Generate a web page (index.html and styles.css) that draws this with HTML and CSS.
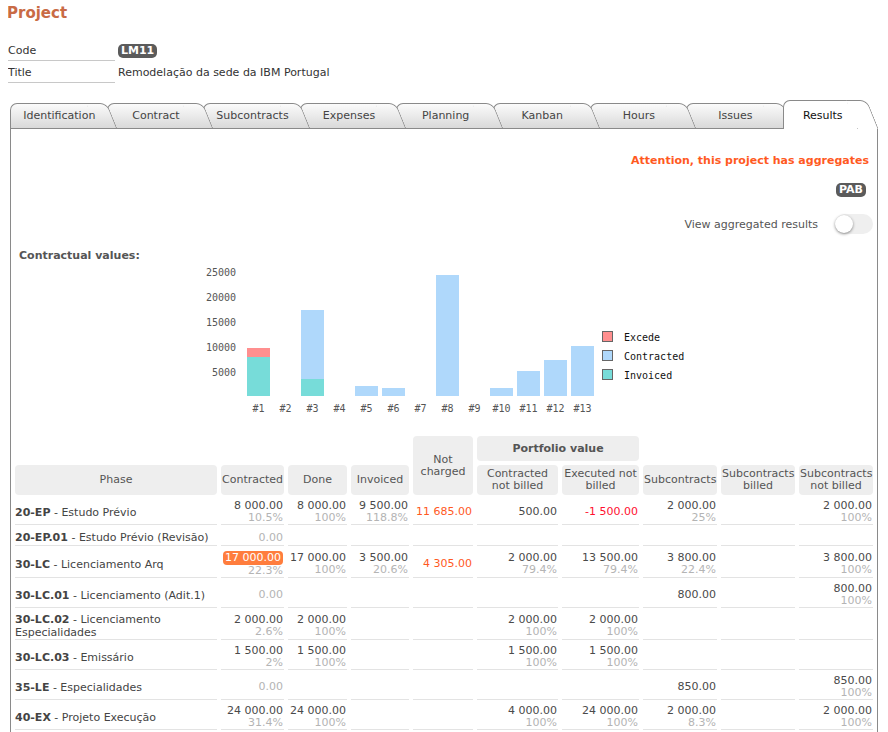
FILE: index.html
```html
<!DOCTYPE html>
<html lang="en">
<head>
    <meta charset="UTF-8">
    <meta name="viewport" content="width=device-width, initial-scale=1.0">
    <title>Project LM11 - Results</title>
    <link rel="stylesheet" href="styles.css">
</head>
<body>
    <h1 class="page-title">Project</h1>

    <div class="info">
        <div class="info-row">
            <div class="info-label">Code</div>
            <div class="info-value"><span class="badge">LM11</span></div>
        </div>
        <div class="info-row">
            <div class="info-label">Title</div>
            <div class="info-value">Remodelação da sede da IBM Portugal</div>
        </div>
    </div>

    <nav class="tabs">
        <a class="tab" href="#identification">Identification</a>
        <a class="tab" href="#contract">Contract</a>
        <a class="tab" href="#subcontracts">Subcontracts</a>
        <a class="tab" href="#expenses">Expenses</a>
        <a class="tab" href="#planning">Planning</a>
        <a class="tab" href="#kanban">Kanban</a>
        <a class="tab" href="#hours">Hours</a>
        <a class="tab" href="#issues">Issues</a>
        <a class="tab active" href="#results">Results</a>
    </nav>

    <section class="panel" id="results">
        <p class="notice">Attention, this project has aggregates</p>
        <p class="aggregates"><span class="badge">PAB</span></p>
        <div class="toggle-row">
            <span>View aggregated results</span>
            <label class="switch"><input type="checkbox"><span class="slider"></span></label>
        </div>

        <h3 class="section-title">Contractual values:</h3>

        <!-- bars: 0.005px per euro, baseline at y=133 -->
        <svg class="chart" width="520" height="169" viewBox="0 0 520 169">
            <g class="axis">
                <text x="56" y="10">25000</text>
                <text x="56" y="35">20000</text>
                <text x="56" y="60">15000</text>
                <text x="56" y="85">10000</text>
                <text x="56" y="110">5000</text>
            </g>
            <g class="bars">
                <rect class="invoiced" x="67" y="94" width="23" height="39"/>
                <rect class="excede" x="67" y="85" width="23" height="9"/>
                <rect class="contracted" x="121" y="47" width="23" height="86"/>
                <rect class="invoiced" x="121" y="116" width="23" height="17"/>
                <rect class="contracted" x="175" y="123" width="23" height="10"/>
                <rect class="contracted" x="202" y="125" width="23" height="8"/>
                <rect class="contracted" x="256" y="12" width="23" height="121"/>
                <rect class="contracted" x="310" y="125" width="23" height="8"/>
                <rect class="contracted" x="337" y="108" width="23" height="25"/>
                <rect class="contracted" x="364" y="97" width="23" height="36"/>
                <rect class="contracted" x="391" y="83" width="23" height="50"/>
            </g>
            <g class="labels">
                <text x="78.5" y="146">#1</text>
                <text x="105.5" y="146">#2</text>
                <text x="132.5" y="146">#3</text>
                <text x="159.5" y="146">#4</text>
                <text x="186.5" y="146">#5</text>
                <text x="213.5" y="146">#6</text>
                <text x="240.5" y="146">#7</text>
                <text x="267.5" y="146">#8</text>
                <text x="294.5" y="146">#9</text>
                <text x="321.5" y="146">#10</text>
                <text x="348.5" y="146">#11</text>
                <text x="375.5" y="146">#12</text>
                <text x="402.5" y="146">#13</text>
            </g>
            <g class="legend">
                <rect class="excede" x="422.5" y="68.5" width="10" height="10"/>
                <rect class="contracted" x="422.5" y="87.5" width="10" height="10"/>
                <rect class="invoiced" x="422.5" y="106.5" width="10" height="10"/>
                <text x="444" y="75">Excede</text>
                <text x="444" y="94">Contracted</text>
                <text x="444" y="113">Invoiced</text>
            </g>
        </svg>

        <table class="results">
            <colgroup>
                <col class="c-phase">
                <col class="c-contracted">
                <col class="c-done">
                <col class="c-invoiced">
                <col class="c-charged">
                <col class="c-cnb">
                <col class="c-enb">
                <col class="c-sub">
                <col class="c-sub">
                <col class="c-subnb">
            </colgroup>
            <thead>
                <tr class="group-row">
                    <th class="blank" colspan="4"></th>
                    <th rowspan="2">Not<br>charged</th>
                    <th class="group" colspan="2">Portfolio value</th>
                    <th class="blank" colspan="3"></th>
                </tr>
                <tr class="head-row">
                    <th>Phase</th>
                    <th>Contracted</th>
                    <th>Done</th>
                    <th>Invoiced</th>
                    <th>Contracted<br>not billed</th>
                    <th>Executed not<br>billed</th>
                    <th>Subcontracts</th>
                    <th>Subcontracts<br>billed</th>
                    <th>Subcontracts<br>not billed</th>
                </tr>
            </thead>
            <tbody>
                <tr>
                    <td class="phase"><b>20-EP</b> - Estudo Prévio</td>
                    <td>8 000.00<div class="pct">10.5%</div></td>
                    <td>8 000.00<div class="pct">100%</div></td>
                    <td>9 500.00<div class="pct">118.8%</div></td>
                    <td class="warn">11 685.00</td>
                    <td>500.00</td>
                    <td class="neg">-1 500.00</td>
                    <td>2 000.00<div class="pct">25%</div></td>
                    <td></td>
                    <td>2 000.00<div class="pct">100%</div></td>
                </tr>
                <tr>
                    <td class="phase"><b>20-EP.01</b> - Estudo Prévio (Revisão)</td>
                    <td class="zero">0.00</td>
                    <td></td><td></td><td></td><td></td><td></td><td></td><td></td><td></td>
                </tr>
                <tr>
                    <td class="phase"><b>30-LC</b> - Licenciamento Arq</td>
                    <td><span class="over">17 000.00</span><div class="pct">22.3%</div></td>
                    <td>17 000.00<div class="pct">100%</div></td>
                    <td>3 500.00<div class="pct">20.6%</div></td>
                    <td class="warn">4 305.00</td>
                    <td>2 000.00<div class="pct">79.4%</div></td>
                    <td>13 500.00<div class="pct">79.4%</div></td>
                    <td>3 800.00<div class="pct">22.4%</div></td>
                    <td></td>
                    <td>3 800.00<div class="pct">100%</div></td>
                </tr>
                <tr>
                    <td class="phase"><b>30-LC.01</b> - Licenciamento (Adit.1)</td>
                    <td class="zero">0.00</td>
                    <td></td><td></td><td></td><td></td><td></td>
                    <td>800.00</td>
                    <td></td>
                    <td>800.00<div class="pct">100%</div></td>
                </tr>
                <tr>
                    <td class="phase"><b>30-LC.02</b> - Licenciamento<br>Especialidades</td>
                    <td>2 000.00<div class="pct">2.6%</div></td>
                    <td>2 000.00<div class="pct">100%</div></td>
                    <td></td><td></td>
                    <td>2 000.00<div class="pct">100%</div></td>
                    <td>2 000.00<div class="pct">100%</div></td>
                    <td></td><td></td><td></td>
                </tr>
                <tr>
                    <td class="phase"><b>30-LC.03</b> - Emissário</td>
                    <td>1 500.00<div class="pct">2%</div></td>
                    <td>1 500.00<div class="pct">100%</div></td>
                    <td></td><td></td>
                    <td>1 500.00<div class="pct">100%</div></td>
                    <td>1 500.00<div class="pct">100%</div></td>
                    <td></td><td></td><td></td>
                </tr>
                <tr>
                    <td class="phase"><b>35-LE</b> - Especialidades</td>
                    <td class="zero">0.00</td>
                    <td></td><td></td><td></td><td></td><td></td>
                    <td>850.00</td>
                    <td></td>
                    <td>850.00<div class="pct">100%</div></td>
                </tr>
                <tr>
                    <td class="phase"><b>40-EX</b> - Projeto Execução</td>
                    <td>24 000.00<div class="pct">31.4%</div></td>
                    <td>24 000.00<div class="pct">100%</div></td>
                    <td></td><td></td>
                    <td>4 000.00<div class="pct">100%</div></td>
                    <td>24 000.00<div class="pct">100%</div></td>
                    <td>2 000.00<div class="pct">8.3%</div></td>
                    <td></td>
                    <td>2 000.00<div class="pct">100%</div></td>
                </tr>
            </tbody>
        </table>
    </section>
</body>
</html>
```

FILE: styles.css
```css
html {
    overflow: hidden;
}
body {
    margin: 0 8px;
    font-family: "DejaVu Sans", Verdana, sans-serif;
    font-size: 11px;
    color: #444;
}
.page-title {
    margin: 4px 0 17px -1px;
    font-size: 15px;
    line-height: 18px;
    color: #c96b45;
}

/* code / title block */
.info-row {
    display: flex;
}
.info-label {
    width: 107px;
    padding: 4px 0 1px;
    line-height: 16px;
    border-bottom: 1px solid #c8c8c8;
    color: #333;
}
.info-value {
    padding: 4px 0 1px 3px;
    line-height: 16px;
    color: #333;
}
.badge {
    display: inline-block;
    padding: 0 3px;
    line-height: 14px;
    border-radius: 5px;
    background-color: #5b5b5b;
    color: white;
    font-weight: bold;
}

/* tabs */
.tabs {
    display: flex;
    align-items: flex-end;
    height: 28px;
    margin: 17px 2px 0;
}
.tab {
    position: relative;
    flex: 0 0 96.6px;
    box-sizing: border-box;
    height: 25px;
    padding: 0 2px 0 4px;
    line-height: 25px;
    text-align: center;
    text-decoration: none;
    color: #444;
}
.tab::before,
.tab::after {
    content: "";
    position: absolute;
    top: 0;
    bottom: 0;
    z-index: -1;
    border: 1px solid #8a8a8a;
    border-bottom: 0;
    background: linear-gradient(#fbfbfb, #d9d9d9);
}
.tab::before {
    left: 0;
    right: 10px;
    border-right: 0;
    border-radius: 7px 0 0 0;
}
.tab::after {
    right: 0;
    width: 20px;
    border-left: 0;
    border-radius: 0 7px 0 0;
    transform-origin: top;
    transform: skewX(22deg);
}
.tab:nth-child(1) { z-index: 9; }
.tab:nth-child(2) { z-index: 8; }
.tab:nth-child(3) { z-index: 7; }
.tab:nth-child(4) { z-index: 6; }
.tab:nth-child(5) { z-index: 5; }
.tab:nth-child(6) { z-index: 4; }
.tab:nth-child(7) { z-index: 3; }
.tab:nth-child(8) { z-index: 2; }
.tab.active {
    z-index: 10;
    flex-basis: 84px;
    height: 29px;
    margin-bottom: -1px;
    padding: 3px 4px 0 0;
    color: #111;
}
.tab.active::before,
.tab.active::after {
    background: white;
}

/* results panel */
.panel {
    margin: 0 2px;
    border: 1px solid #8a8a8a;
    border-bottom: 0;
    min-height: 620px;
}
.notice {
    margin: 25px 8px 0 0;
    line-height: 14px;
    text-align: right;
    font-weight: bold;
    color: #ff5a1f;
}
.aggregates {
    margin: 15px 11px 0 0;
    line-height: 14px;
    text-align: right;
}
.toggle-row {
    display: flex;
    justify-content: flex-end;
    align-items: center;
    gap: 17px;
    margin: 17px 4px 0 0;
    color: #555;
}
.switch {
    position: relative;
    width: 38px;
    height: 20px;
}
.switch input {
    display: none;
}
.slider {
    position: absolute;
    inset: 0;
    border-radius: 10px;
    background-color: #efefef;
}
.slider::after {
    content: "";
    position: absolute;
    left: 0;
    top: 1px;
    width: 18px;
    height: 18px;
    border-radius: 50%;
    background-color: white;
    box-shadow: 0 1px 3px rgba(0, 0, 0, 0.45);
}
.section-title {
    margin: 15px 0 0 8px;
    font-size: 11px;
    line-height: 14px;
    color: #555;
}

/* chart */
.chart {
    display: block;
    margin-left: 169px;
    font-family: "DejaVu Sans Mono", monospace;
    font-size: 10px;
}
.chart .axis text {
    fill: #555;
    text-anchor: end;
    dominant-baseline: middle;
}
.chart .labels text {
    fill: #555;
    text-anchor: middle;
    dominant-baseline: middle;
}
.chart .legend text {
    fill: #111;
    dominant-baseline: middle;
}
.chart .legend rect {
    stroke: #666;
    stroke-width: 1;
}
.chart .contracted { fill: #afd8fb; }
.chart .invoiced { fill: #77dcd9; }
.chart .excede { fill: #ff8f8f; }

/* results table */
.results {
    width: 100%;
    table-layout: fixed;
    border-collapse: separate;
    border-spacing: 4px;
    margin: 0;
}
.c-phase { width: 202px; }
.c-contracted { width: 63px; }
.c-done { width: 59px; }
.c-invoiced { width: 58px; }
.c-charged { width: 60px; }
.c-cnb { width: 81px; }
.c-enb { width: 77px; }
.c-sub { width: 74px; }
.c-subnb { width: 74px; }
.results th {
    padding: 3px 1px;
    line-height: 12px;
    border-radius: 4px;
    background-color: #eee;
    font-weight: normal;
    color: #555;
}
.results th.blank {
    background: none;
}
.results th.group {
    font-weight: bold;
}
.group-row {
    height: 25px;
}
.head-row {
    height: 30px;
}
.results tbody tr {
    height: 17px;
}
.results td {
    padding: 1px 1px 0 1px;
    line-height: 12px;
    border-bottom: 1px solid #e3e3e3;
    text-align: right;
    vertical-align: middle;
    color: #4a4a4a;
    white-space: nowrap;
}
.results td.phase {
    padding-left: 0;
    line-height: 13px;
    text-align: left;
    white-space: normal;
    color: #444;
}
.pct {
    color: #b4b4b4;
}
.zero {
    color: #b4b4b4 !important;
}
.warn {
    color: #ff5a1f !important;
}
.neg {
    color: #ff1030 !important;
}
.over {
    display: inline-block;
    padding: 0 2px;
    border-radius: 4px;
    line-height: 14px;
    background-color: #ff7d3d;
    color: white;
}
```
